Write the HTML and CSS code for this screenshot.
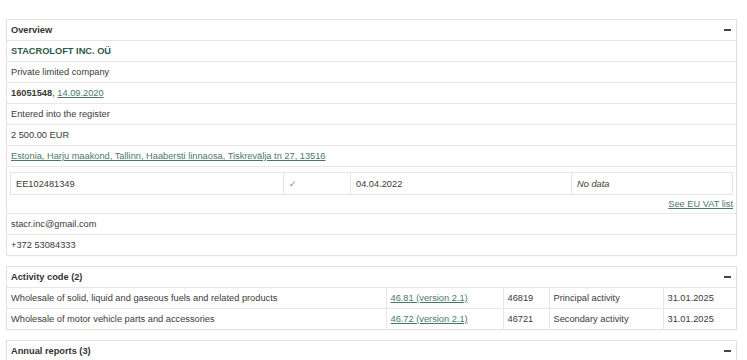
FILE: index.html
```html
<!DOCTYPE html>
<html lang="en">
<head>
  <meta charset="UTF-8">
  <title>STACROLOFT INC. OÜ</title>
  <link rel="stylesheet" href="styles.css">
</head>
<body>
  <div class="panel">
    <div class="panel-head">
      <span>Overview</span>
      <span class="toggle"></span>
    </div>
    <div class="row name">STACROLOFT INC. OÜ</div>
    <div class="row">Private limited company</div>
    <div class="row"><b>16051548</b>, <a href="#">14.09.2020</a></div>
    <div class="row">Entered into the register</div>
    <div class="row">2 500.00 EUR</div>
    <div class="row"><a href="#">Estonia, Harju maakond, Tallinn, Haabersti linnaosa, Tiskreväljа tn 27, 13516</a></div>
    <div class="row vat">
      <table class="grid vat-table">
        <colgroup>
          <col style="width:273px">
          <col style="width:67px">
          <col style="width:221px">
          <col>
        </colgroup>
        <tr>
          <td>EE102481349</td>
          <td class="check">✓</td>
          <td>04.04.2022</td>
          <td><i>No data</i></td>
        </tr>
      </table>
      <div class="vat-link"><a href="#">See EU VAT list</a></div>
    </div>
    <div class="row">stacr.inc@gmail.com</div>
    <div class="row last">+372 53084333</div>
  </div>

  <div class="panel">
    <div class="panel-head">
      <span>Activity code (2)</span>
      <span class="toggle"></span>
    </div>
    <table class="grid activity">
      <colgroup>
        <col style="width:379px">
        <col style="width:117px">
        <col style="width:46px">
        <col style="width:114px">
        <col>
      </colgroup>
      <tr>
        <td>Wholesale of solid, liquid and gaseous fuels and related products</td>
        <td><a href="#">46.81 (version 2.1)</a></td>
        <td>46819</td>
        <td>Principal activity</td>
        <td>31.01.2025</td>
      </tr>
      <tr>
        <td>Wholesale of motor vehicle parts and accessories</td>
        <td><a href="#">46.72 (version 2.1)</a></td>
        <td>46721</td>
        <td>Secondary activity</td>
        <td>31.01.2025</td>
      </tr>
    </table>
  </div>

  <div class="panel">
    <div class="panel-head">
      <span>Annual reports (3)</span>
      <span class="toggle"></span>
    </div>
  </div>
</body>
</html>
```

FILE: styles.css
```css
body {
  margin: 0;
  padding: 19px 10px 0 6px;
  background: #fff;
  color: #3a3a3a;
  font-family: "Liberation Sans", Arial, sans-serif;
  font-size: 9.25px;
}

a {
  color: #4a7868;
  text-decoration: underline;
}

.panel {
  border: 1px solid #e2e2e2;
  margin-bottom: 10px;
  box-shadow: 0 1px 2px rgba(0, 0, 0, 0.04);
}

.panel-head {
  display: flex;
  justify-content: space-between;
  align-items: center;
  height: 20px;
  padding: 0 4px;
  font-weight: bold;
  color: #333;
  border-bottom: 1px solid #e6e6e6;
}

.toggle {
  width: 7px;
  height: 2px;
  margin-right: 1px;
  background: #444;
}

.row {
  height: 20px;
  line-height: 20px;
  padding: 0 4px;
  border-bottom: 1px solid #e8e8e8;
  white-space: nowrap;
}

.row.last {
  border-bottom: none;
}

.name {
  color: #2c5a46;
  font-weight: bold;
}

.row.vat {
  height: auto;
  line-height: normal;
  padding: 5px 3px 0 3px;
}

.grid {
  width: 100%;
  border-collapse: collapse;
  table-layout: fixed;
}

.grid td {
  height: 20px;
  padding: 0 4px;
  border: 1px solid #e6e6e6;
  white-space: nowrap;
}

.vat-table td {
  height: 21px;
  padding: 0 5px;
}

.check {
  color: #888;
}

.vat-link {
  height: 18px;
  line-height: 18px;
  text-align: right;
}

.activity td {
  border-top: none;
}

.activity tr:last-child td {
  border-bottom: none;
}

.activity td:first-child {
  border-left: none;
}

.activity td:last-child {
  border-right: none;
}
```
